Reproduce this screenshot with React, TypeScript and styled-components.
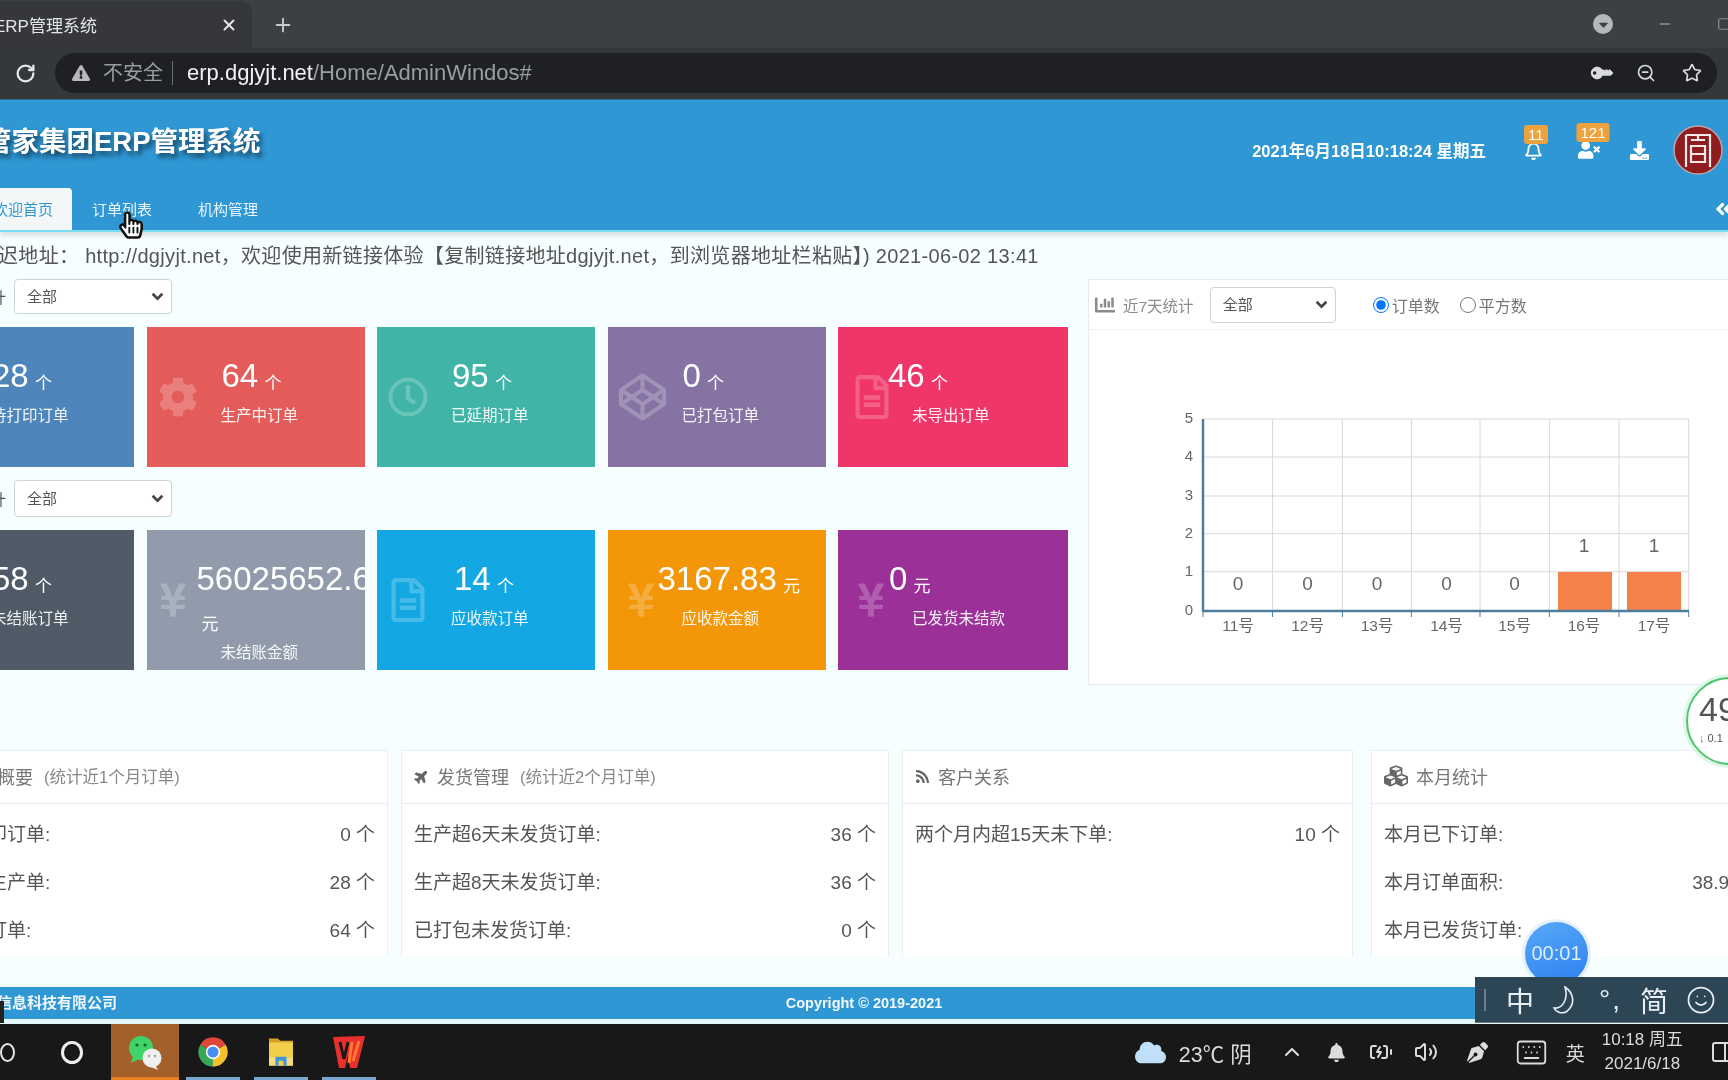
import React from "react";
import styled, { createGlobalStyle } from "styled-components";
import {
  FaAngleDoubleLeft, FaChartBar, FaCloud, FaCodepen, FaCog, FaCubes, FaDownload, FaExclamationTriangle,
  FaHandPointer, FaHome, FaKey, FaPlane, FaRegBell, FaRegClock, FaRegFileAlt, FaRegHandPointer, FaRss,
  FaUserTimes, FaYenSign, FaBell, FaCaretDown, FaPenNib,
} from "react-icons/fa";
import { ChevronUp, Keyboard, Minus, Plus, RotateCw, Smile, Square, Star, Volume2, X, ZoomOut, BatteryCharging, PanelRight } from "lucide-react";

const chevron = `url("data:image/svg+xml,%3Csvg xmlns='http://www.w3.org/2000/svg' viewBox='0 0 12 8'%3E%3Cpath d='M1.5 1.5 6 6l4.5-4.5' fill='none' stroke='%23444' stroke-width='2.4'/%3E%3C/svg%3E")`;

const Global = createGlobalStyle`
  html, body { margin: 0; padding: 0; background: #f6feff; }
  body { font-family: "Liberation Sans", "Noto Sans CJK SC", sans-serif; overflow: hidden; }
  * { box-sizing: border-box; }
`;

const Screen = styled.div`
  position: relative; width: 1728px; height: 1080px; overflow: hidden;
  display: flex; flex-direction: column; background: #f6feff; filter: blur(0.45px);
`;
const TabStrip = styled.div`
  height: 48px; flex: none; background: #3c4043; display: flex; align-items: stretch; color: #e3e5e7;
`;
const BrowserTab = styled.div`
  width: 252px; margin-top: 1px; background: #35373a; border-radius: 0 12px 0 0; display: flex; align-items: center;
  justify-content: space-between; padding: 0 14px 0 0; font-size: 17px;
  span { margin-left: -6px; }
`;
const NewTab = styled.div`
  width: 62px; display: flex; align-items: center; justify-content: center; padding-top: 2px; color: #c9cccf;
`;
const StripRight = styled.div`
  margin-left: auto; display: flex; align-items: center; gap: 44px; color: #8a8e92; margin-right: -3px;
`;
const ProfileDot = styled.div`
  width: 20px; height: 20px; border-radius: 50%; background: #b5b7ba; color: #3c4043;
  display: flex; align-items: center; justify-content: center;
`;
const ToolBar = styled.div`
  height: 52px; flex: none; background: #35383b; display: flex; align-items: center; padding: 0 11px 1px 15px; gap: 19px;
  border-bottom: 1px solid #2a6f97; color: #d5d7da;
`;
const AddressBar = styled.div`
  flex: 1; height: 40px; border-radius: 20px; background: #1f2023; display: flex; align-items: center; padding: 0 15px 0 17px;
  font-size: 22px; color: #9a9da1;
`;
const Insecure = styled.span`
  margin-left: 13px; font-size: 20px; color: #9a9da1; padding-right: 9px; border-right: 1px solid #6d7074; line-height: 24px;
`;
const Host = styled.span`
  color: #f1f2f3; margin-left: 14px;
`;
const AddressIcons = styled.div`
  margin-left: auto; display: flex; align-items: center; gap: 26px; color: #d8dadc;
`;
const KeyIcon = styled(FaKey)`
  transform: rotate(-135deg);
`;

const Header = styled.header`
  height: 132px; flex: none; background: #2f97d4; border-bottom: 2px solid #7adcf0; box-shadow: 0 3px 6px rgba(0,0,0,.14);
  display: flex; flex-direction: column; color: #fff; position: relative;
`;
const HeaderTop = styled.div`
  height: 88px; display: flex; align-items: flex-start; justify-content: space-between;
`;
const Title = styled.h1`
  margin: 24px 0 0 -16px; font-size: 27.5px; line-height: 36px; font-weight: 700; white-space: nowrap;
  text-shadow: 3px 4px 5px rgba(0,0,0,.55);
`;
const HeaderRight = styled.div`
  display: flex; align-items: center; height: 52px; margin-top: 24px; padding-right: 5px;
`;
const DateText = styled.div`
  font-size: 16.5px; font-weight: 700; white-space: nowrap; margin-right: 25px;
`;
const HeaderAction = styled.div<{ $w: number }>`
  position: relative; width: ${p => p.$w}px; display: flex; justify-content: center;
`;
const Badge = styled.span`
  position: absolute; left: 50%; top: -16px; transform: translateX(-38%); background: #eea23f; color: #fff;
  font-size: 15px; line-height: 19px; padding: 0 4px; border-radius: 3px; white-space: nowrap;
`;
const Avatar = styled.svg`
  width: 50px; height: 50px; margin-left: 18px; flex: none;
`;
const TabsRow = styled.nav`
  height: 42px; display: flex; align-items: stretch; gap: 6px;
`;
const NavTab = styled.div<{ $active?: boolean }>`
  display: flex; align-items: center; font-size: 15px; white-space: nowrap;
  padding: 0 ${p => (p.$active ? 19 : 20)}px 2px;
  margin: ${p => (p.$active ? "0 -6px 0 -26px" : "0")};
  background: ${p => (p.$active ? "#f4f7f8" : "transparent")};
  color: ${p => (p.$active ? "#2f97d4" : "#eaf6fc")};
  border-radius: ${p => (p.$active ? "0 4px 0 0" : "0")};
`;
const Collapse = styled.div`
  margin-left: auto; margin-right: -6px; display: flex; align-items: center;
`;

const Main = styled.main`
  flex: 1; display: flex; flex-direction: column; min-height: 0;
`;
const Notice = styled.div`
  height: 47px; flex: none; display: flex; align-items: center; padding-bottom: 2px; font-size: 20px; color: #555; white-space: pre; margin-left: -2px;
  letter-spacing: .32px;
`;
const StatsRow = styled.section`
  display: flex; gap: 19.5px; margin-left: -83px; height: 406px; flex: none;
`;
const LeftCol = styled.div`
  width: 1151.5px; flex: none; display: flex; flex-direction: column; gap: 13px;
`;
const FilterRow = styled.div<{ $h: number }>`
  height: ${p => p.$h}px; display: flex; align-items: center; font-size: 15px; color: #555;
  label { width: 89px; text-align: right; white-space: nowrap; margin-right: 8px; }
`;
const Select = styled.select<{ $w: number }>`
  width: ${p => p.$w}px; height: 100%; appearance: none; background: #fff ${chevron} no-repeat right 7px center / 13px 9px;
  border: 1px solid #cfd3d6; border-radius: 4px;
  font: 15px "Liberation Sans", "Noto Sans CJK SC", sans-serif; color: #555; padding-left: 12px;
`;
const ChartSelect = styled(Select)`
  height: 36px; margin-right: 37px;
`;
const CardGrid = styled.div`
  display: grid; grid-template-columns: 217px 218px 218px 218px 230px; gap: 12.5px; height: 140px;
`;
const Card = styled.div<{ $bg: string }>`
  position: relative; overflow: hidden; background: ${p => p.$bg}; color: #fff; padding-top: 30px;
`;
const CardIcon = styled.div<{ $left: number }>`
  position: absolute; left: ${p => p.$left}px; top: 50%; transform: translateY(-50%); opacity: .22; display: flex; line-height: 0;
`;
const Value = styled.div<{ $left: number }>`
  position: relative; padding-left: ${p => p.$left}px; font-size: 33px; line-height: 38px;
`;
const Unit = styled.span<{ $shift: number }>`
  font-size: 17px; position: relative; top: 2px; margin-left: ${p => p.$shift}px;
`;
const CardLabel = styled.div<{ $mt: number }>`
  position: relative; margin: ${p => p.$mt}px 0 0 74px; font-size: 15.5px; line-height: 20px; color: rgba(255,255,255,.92); white-space: nowrap;
`;

const ChartPanel = styled.div`
  width: 720px; flex: none; background: #fff; border: 1px solid #e6ecef;
`;
const ChartHead = styled.div`
  height: 50px; display: flex; align-items: center; padding: 0 0 0 6px; border-bottom: 1px solid #eef1f2; color: #8a8a8a; font-size: 15.5px;
`;
const ChartTitle = styled.span`
  margin: 0 16px 0 8px; white-space: nowrap;
`;
const RadioLabel = styled.label`
  display: flex; align-items: center; color: #777; font-size: 16px; margin-right: 20px;
  input { margin: 0 3px 0 0; width: 16px; height: 16px; }
`;
const ChartBody = styled.div`
  padding: 70px 0 0 81px;
`;
const Chart = styled.svg`
  display: block; width: 540px; height: 250px;
  text { font-family: "Liberation Sans", "Noto Sans CJK SC", sans-serif; fill: #666; }
`;

const Bottom = styled.section`
  display: flex; margin: 65px 0 0 -63px; height: 207px; overflow: hidden; flex: none;
`;
const InfoPanel = styled.div<{ $w: number; $gap: number }>`
  width: ${p => p.$w}px; flex: none; margin-right: ${p => p.$gap}px; background: #fff; border: 1px solid #e9eef1; border-bottom: 0;
`;
const InfoHead = styled.div`
  height: 53px; display: flex; align-items: center; padding: 0 12px 2px; border-bottom: 1px solid #e9eef1; color: #777; font-size: 18px; white-space: nowrap;
  svg { flex: none; margin-right: 8px; color: #666; }
  small { font-size: 16.5px; color: #888; margin-left: 11px; }
`;
const InfoList = styled.div`
  padding-top: 4px;
`;
const InfoRow = styled.div`
  height: 48px; display: flex; align-items: center; justify-content: space-between; padding: 0 12px; font-size: 19px; color: #555; white-space: nowrap;
`;
const PlaneIcon = styled(FaPlane)`
  transform: rotate(-45deg);
`;

const Footer = styled.footer`
  margin-top: auto; height: 32px; flex: none; background: #2f97d4; color: #f0f8fc; font-size: 15px; font-weight: 700;
  display: grid; grid-template-columns: 1fr auto 1fr; align-items: center;
  span:first-child { margin: -3px 0 0 -3px; }
  span:nth-child(2) { font-size: 14.5px; }
`;
const FooterEdge = styled.div`
  height: 5px; flex: none; background: #e3f6f8;
`;
const TaskBar = styled.div`
  height: 56px; flex: none; background: #181818; display: flex; align-items: center; color: #e8e8e8;
`;
const SearchGlyph = styled.div`
  width: 15px; height: 19px; border: 2px solid #e6e6e6; border-radius: 50%; flex: none;
`;
const Cortana = styled.div`
  width: 22px; height: 23px; margin: 0 28px 0 46px; border: 3px solid #eee; border-radius: 50%; flex: none;
`;
const TaskItem = styled.div<{ $active?: boolean; $run?: boolean }>`
  width: 68px; height: 100%; display: flex; align-items: center; justify-content: center; flex: none;
  background: ${p => (p.$active ? "#a4602a" : "transparent")};
  box-shadow: ${p => (p.$active ? "inset 0 -3px 0 #e97f1d" : "none")};
  position: relative;
  &::after {
    content: ""; display: ${p => (p.$run ? "block" : "none")}; position: absolute; left: 7px; right: 7px; bottom: 0; height: 3px; background: #7aa7cf;
  }
`;
const Tray = styled.div`
  margin-left: auto; display: flex; align-items: center; height: 100%; font-size: 19px; color: #dcdcdc;
`;
const TrayText = styled.span`
  margin: 0 28px 0 13px; white-space: nowrap; font-size: 21.5px;
`;
const TrayItem = styled.div<{ $gap: number }>`
  display: flex; align-items: center; margin-right: ${p => p.$gap}px;
`;
const Clock = styled.div`
  font-size: 17px; line-height: 24px; text-align: center; white-space: nowrap; margin-right: 27px;
`;

const ImeBar = styled.div`
  position: absolute; left: 1475px; top: 977px; width: 253px; height: 46px; background: #2d4656; color: #e8eef2;
  display: flex; align-items: center; font-size: 28px; padding-left: 9px; border-bottom: 1px solid #6a7c88;
  i { width: 2px; height: 22px; background: #6d808c; margin-right: 20px; }
`;
const ImeItem = styled.span<{ $gap: number }>`
  margin-right: ${p => p.$gap}px; display: flex; align-items: center; letter-spacing: 2px;
`;
const Timer = styled.div`
  position: absolute; left: 1525px; top: 922px; width: 63px; height: 63px; border-radius: 50%;
  background: linear-gradient(160deg, #58a9f7, #2d7ff0); color: #dbeeff; box-shadow: 0 0 0 3px rgba(190,220,250,.4);
  display: flex; align-items: center; justify-content: center; font-size: 20px;
`;
const Gauge = styled.div`
  position: absolute; left: 1686px; top: 677px; width: 88px; height: 88px; border-radius: 50%; background: #fff;
  border: 2px solid #4cc76f; box-shadow: 0 0 0 3px #dff5e6; color: #555; padding: 11px 0 0 11px; font-size: 34px; line-height: 38px;
  small { display: block; font-size: 11px; line-height: 14px; margin-top: 3px; white-space: nowrap; }
  b { color: #2da44e; font-weight: 700; margin-right: 3px; }
`;
const HandCursor = styled.div`
  position: absolute; left: 119px; top: 208px; width: 24px; height: 34px;
  svg { position: absolute; inset: 0; width: 100%; height: 100%; }
`;
const CornerMark = styled.div`
  position: absolute; left: 0; top: 1001px; width: 4px; height: 22px; background: #222;
`;

type CardData = { bg: string; icon: React.ReactNode; iconLeft: number; value: string; unit: string; label: string; left: number };

const row1: CardData[] = [
  { bg: "#4e86bb", icon: <FaRegFileAlt size={40} />, iconLeft: 12, value: "28", unit: "个", label: "待打印订单", left: 75 },
  { bg: "#e35c5a", icon: <FaCog size={40} />, iconLeft: 11, value: "64", unit: "个", label: "生产中订单", left: 75 },
  { bg: "#40b4a6", icon: <FaRegClock size={40} />, iconLeft: 11, value: "95", unit: "个", label: "已延期订单", left: 75 },
  { bg: "#8773a3", icon: <FaCodepen size={47} />, iconLeft: 11, value: "0", unit: "个", label: "已打包订单", left: 75 },
  { bg: "#f03568", icon: <FaRegFileAlt size={44} />, iconLeft: 12, value: "46", unit: "个", label: "未导出订单", left: 50 },
];
const row2: CardData[] = [
  { bg: "#4f5b66", icon: <FaRegFileAlt size={40} />, iconLeft: 12, value: "58", unit: "个", label: "未结账订单", left: 75 },
  { bg: "#919bac", icon: <FaYenSign size={38} />, iconLeft: 7, value: "56025652.66", unit: "元", label: "未结账金额", left: 50 },
  { bg: "#13a8e3", icon: <FaRegFileAlt size={44} />, iconLeft: 9, value: "14", unit: "个", label: "应收款订单", left: 77 },
  { bg: "#f39708", icon: <FaYenSign size={38} />, iconLeft: 14, value: "3167.83", unit: "元", label: "应收款金额", left: 50 },
  { bg: "#9b3098", icon: <FaYenSign size={38} />, iconLeft: 14, value: "0", unit: "元", label: "已发货未结款", left: 51 },
];

const StatCard = ({ d }: { d: CardData }) => {
  const wraps = d.value.length > 8;
  return (
    <Card $bg={d.bg}>
      <CardIcon $left={d.iconLeft}>{d.icon}</CardIcon>
      <Value $left={d.left}>{d.value} <Unit $shift={wraps ? 5 : -3}>{d.unit}</Unit></Value>
      <CardLabel $mt={wraps ? 1 : 5}>{d.label}</CardLabel>
    </Card>
  );
};

const gridX = [33, 102.6, 172.4, 241.4, 310, 379.4, 449, 518.7];
const gridY = [19, 57, 96, 133.7, 171.7, 211];
const dayX = [68, 137.6, 207, 276.5, 344.6, 414, 484];
const dayV = [0, 0, 0, 0, 0, 1, 1];

const BarChart = () => (
  <Chart viewBox="0 0 540 250">
    {gridY.slice(0, 5).map(y => <line key={y} x1={33} x2={518.7} y1={y} y2={y} stroke="#d8d8d8" />)}
    {gridX.slice(1).map(x => <line key={x} x1={x} x2={x} y1={19} y2={211} stroke="#d8d8d8" />)}
    {gridX.map(x => <line key={x} x1={x} x2={x} y1={211} y2={217} stroke="#4d7f9c" />)}
    <rect x={388} y={172} width={54} height={38} fill="#f5814b" />
    <rect x={457} y={172} width={54} height={38} fill="#f5814b" />
    <line x1={33} x2={33} y1={19} y2={212} stroke="#4d7f9c" strokeWidth={2.5} />
    <line x1={33} x2={519} y1={211} y2={211} stroke="#4d7f9c" strokeWidth={2.5} />
    {[5, 4, 3, 2, 1, 0].map((v, i) => (
      <text key={v} x={19} y={gridY[i] + 4} fontSize={15} textAnchor="middle">{v}</text>
    ))}
    {dayX.map((x, i) => (
      <g key={x}>
        <text x={x} y={dayV[i] ? 152 : 190} fontSize={19} textAnchor="middle">{dayV[i]}</text>
        <text x={x} y={231} fontSize={15.5} textAnchor="middle">{`${11 + i}号`}</text>
      </g>
    ))}
  </Chart>
);

const Info = ({ w, gap, icon, title, sub, rows }: { w: number; gap: number; icon: React.ReactNode; title: string; sub?: string; rows: [string, string][] }) => (
  <InfoPanel $w={w} $gap={gap}>
    <InfoHead>{icon}{title}{sub && <small>{sub}</small>}</InfoHead>
    <InfoList>
      {rows.map(([k, v]) => <InfoRow key={k}><span>{k}</span><span>{v}</span></InfoRow>)}
    </InfoList>
  </InfoPanel>
);

const ChromeLogo = () => (
  <svg width="32" height="32" viewBox="0 0 24 24">
    <path d="M12 12 2.47 6.5A11 11 0 0 1 21.53 6.5Z" fill="#e0463a" />
    <path d="M12 12 21.53 6.5A11 11 0 0 1 12 23Z" fill="#f6c02c" />
    <path d="M12 12 12 23A11 11 0 0 1 2.47 6.5Z" fill="#3aa757" />
    <circle cx="12" cy="12" r="5.4" fill="#fff" />
    <circle cx="12" cy="12" r="4.2" fill="#4a8df0" />
  </svg>
);
const WeChatLogo = () => (
  <svg width="36" height="36" viewBox="0 0 36 36">
    <ellipse cx="14" cy="14" rx="12" ry="12" fill="#3fd46a" />
    <path d="M6 22l-2 7 8-4z" fill="#3fd46a" />
    <circle cx="10" cy="11" r="1.6" fill="#17602f" />
    <circle cx="18" cy="11" r="1.6" fill="#17602f" />
    <ellipse cx="25" cy="24" rx="9.5" ry="9.5" fill="#efefef" />
    <path d="M28 31l3 5-7-3z" fill="#efefef" />
    <circle cx="22" cy="22" r="1.2" fill="#999" />
    <circle cx="28" cy="22" r="1.2" fill="#999" />
  </svg>
);
const FolderLogo = () => (
  <svg width="30" height="32" viewBox="0 0 32 40">
    <path d="M1 3h11l3 3h16v6H1z" fill="#d6a022" />
    <rect x="1" y="8" width="30" height="29" fill="#f2cf4a" />
    <rect x="1" y="27" width="30" height="10" fill="#f6dc7c" />
    <rect x="9" y="26" width="14" height="11" fill="#3f97d6" />
    <rect x="13" y="31" width="6" height="6" fill="#f2cf4a" />
  </svg>
);
const WpsLogo = () => (
  <svg width="34" height="34" viewBox="0 0 34 34">
    <path d="M1 2 33 1 25 33 18 33 16 20 13 33 7 33Z" fill="#e8302c" />
    <path d="M8 7 12 24 16 7" fill="none" stroke="#181818" strokeWidth="3" />
    <path d="M20 7 17 28 M21 26 27 6" fill="none" stroke="#ff7a30" strokeWidth="3" />
  </svg>
);
const Crescent = () => (
  <svg width="28" height="28" viewBox="0 0 28 28" fill="none" stroke="currentColor" strokeWidth="1.6">
    <path d="M13 1C22 7 24 19 14 26 9 28 4 26 2 22 9 23 17 15 13 1Z" />
  </svg>
);

export default function App() {
  return (
    <>
      <Global />
      <Screen>
        <TabStrip>
          <BrowserTab><span>ERP管理系统</span><X size={18} strokeWidth={2.6} /></BrowserTab>
          <NewTab><Plus size={22} /></NewTab>
          <StripRight>
            <ProfileDot><FaCaretDown size={15} /></ProfileDot>
            <Minus size={16} />
            <Square size={14} />
          </StripRight>
        </TabStrip>
        <ToolBar>
          <RotateCw size={21} strokeWidth={2.6} color="#e4e6e8" />
          <AddressBar>
            <FaExclamationTriangle size={18} color="#b7b9bc" />
            <Insecure>不安全</Insecure>
            <Host>erp.dgjyjt.net</Host>/Home/AdminWindos#
            <AddressIcons>
              <KeyIcon size={18} />
              <ZoomOut size={20} />
              <Star size={20} />
            </AddressIcons>
          </AddressBar>
        </ToolBar>
        <Header>
          <HeaderTop>
            <Title>管家集团ERP管理系统</Title>
            <HeaderRight>
              <DateText>2021年6月18日10:18:24 星期五</DateText>
              <HeaderAction $w={44}><FaRegBell size={19} /><Badge>11</Badge></HeaderAction>
              <HeaderAction $w={68}><FaUserTimes size={22} /><Badge>121</Badge></HeaderAction>
              <HeaderAction $w={32}><FaDownload size={19} /></HeaderAction>
              <Avatar viewBox="0 0 50 50">
                <circle cx="25" cy="25" r="24" fill="#8f1d20" stroke="#b9a5a7" strokeWidth="1.5" />
                <path d="M13 10H37V42M13 10V42M18 15H32M25 10V15M18 21H32V37H18ZM18 29H32" fill="none" stroke="#f3e8e8" strokeWidth="2.2" />
              </Avatar>
            </HeaderRight>
          </HeaderTop>
          <TabsRow>
            <NavTab $active>欢迎首页</NavTab>
            <NavTab>订单列表</NavTab>
            <NavTab>机构管理</NavTab>
            <Collapse><FaAngleDoubleLeft size={20} /></Collapse>
          </TabsRow>
        </Header>
        <Main>
          <Notice>迟地址： http://dgjyjt.net，欢迎使用新链接体验【复制链接地址dgjyjt.net，到浏览器地址栏粘贴】) 2021-06-02 13:41</Notice>
          <StatsRow>
            <LeftCol>
              <FilterRow $h={35}>
                <label>订单统计</label>
                <Select $w={158} defaultValue="all"><option value="all">全部</option></Select>
              </FilterRow>
              <CardGrid>{row1.map(d => <StatCard key={d.label} d={d} />)}</CardGrid>
              <FilterRow $h={37}>
                <label>财务统计</label>
                <Select $w={158} defaultValue="all"><option value="all">全部</option></Select>
              </FilterRow>
              <CardGrid>{row2.map(d => <StatCard key={d.label} d={d} />)}</CardGrid>
            </LeftCol>
            <ChartPanel>
              <ChartHead>
                <FaChartBar size={20} />
                <ChartTitle>近7天统计</ChartTitle>
                <ChartSelect $w={126} defaultValue="all"><option value="all">全部</option></ChartSelect>
                <RadioLabel><input type="radio" name="mode" defaultChecked />订单数</RadioLabel>
                <RadioLabel><input type="radio" name="mode" />平方数</RadioLabel>
              </ChartHead>
              <ChartBody><BarChart /></ChartBody>
            </ChartPanel>
          </StatsRow>
          <Bottom>
            <Info w={451} gap={13} icon={<FaHome size={3} />} title="订单概要" sub="(统计近1个月订单)"
              rows={[["待打印订单:", "0 个"], ["待下生产单:", "28 个"], ["生产订单:", "64 个"]]} />
            <Info w={488} gap={13} icon={<PlaneIcon size={15} />} title="发货管理" sub="(统计近2个月订单)"
              rows={[["生产超6天未发货订单:", "36 个"], ["生产超8天未发货订单:", "36 个"], ["已打包未发货订单:", "0 个"]]} />
            <Info w={451} gap={18} icon={<FaRss size={15} />} title="客户关系"
              rows={[["两个月内超15天未下单:", "10 个"]]} />
            <Info w={425} gap={0} icon={<FaCubes size={24} />} title="本月统计"
              rows={[["本月已下订单:", "12 个"], ["本月订单面积:", "38.95 平方"], ["本月已发货订单:", "8 个"]]} />
          </Bottom>
          <Footer>
            <span>信息科技有限公司</span>
            <span>Copyright © 2019-2021</span>
            <span />
          </Footer>
          <FooterEdge />
        </Main>
        <TaskBar>
          <SearchGlyph />
          <Cortana />
          <TaskItem $active><WeChatLogo /></TaskItem>
          <TaskItem $run><ChromeLogo /></TaskItem>
          <TaskItem $run><FolderLogo /></TaskItem>
          <TaskItem $run><WpsLogo /></TaskItem>
          <Tray>
            <FaCloud size={31} color="#bfe0f8" />
            <TrayText>23℃ 阴</TrayText>
            <TrayItem $gap={23}><ChevronUp size={24} /></TrayItem>
            <TrayItem $gap={23}><FaBell size={19} /></TrayItem>
            <TrayItem $gap={21}><BatteryCharging size={24} /></TrayItem>
            <TrayItem $gap={29}><Volume2 size={24} /></TrayItem>
            <TrayItem $gap={27}><FaPenNib size={21} /></TrayItem>
            <TrayItem $gap={18}><Keyboard size={33} strokeWidth={1.3} /></TrayItem>
            <TrayItem $gap={17}>英</TrayItem>
            <Clock>10:18 周五<br />2021/6/18</Clock>
            <TrayItem $gap={-6}><PanelRight size={24} /></TrayItem>
          </Tray>
        </TaskBar>
        <CornerMark />
        <Gauge>49<small><b>↓</b>0.1</small></Gauge>
        <Timer>00:01</Timer>
        <ImeBar>
          <i />
          <ImeItem $gap={16}>中</ImeItem>
          <ImeItem $gap={19}><Crescent /></ImeItem>
          <ImeItem $gap={18}>°,</ImeItem>
          <ImeItem $gap={16}>简</ImeItem>
          <ImeItem $gap={0}><Smile size={30} strokeWidth={1.4} /></ImeItem>
        </ImeBar>
        <HandCursor>
          <FaHandPointer color="#fff" />
          <FaRegHandPointer color="#111" />
        </HandCursor>
      </Screen>
    </>
  );
}
